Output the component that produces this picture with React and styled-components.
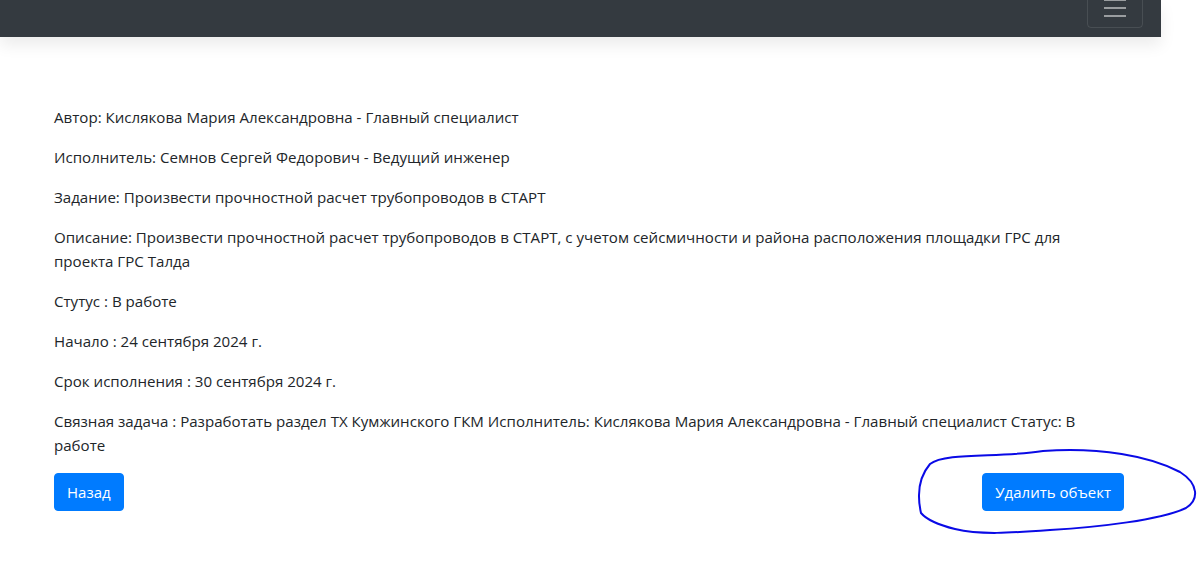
import React from "react";
import styled, { createGlobalStyle } from "styled-components";

const Global = createGlobalStyle`
  html, body { margin: 0; padding: 0; background: #fff; }
  body {
    font-family: "Open Sans", "Noto Sans", sans-serif;
    font-size: 15px;
    color: #212529;
    overflow: hidden;
  }
  * { box-sizing: border-box; }
`;

const Page = styled.div`
  position: relative;
  width: 1197px;
  height: 562px;
`;

const Navbar = styled.nav`
  width: 1161px;
  height: 37px;
  background: #343a40;
  display: flex;
  justify-content: flex-end;
  align-items: flex-end;
  padding: 0 18px 9px 0;
  overflow: hidden;
  box-shadow: 0 8px 16px rgba(0, 0, 0, 0.08);
  position: relative;
  z-index: 1;
`;

const Toggler = styled.button`
  width: 56px;
  height: 40px;
  flex: none;
  background: transparent;
  border: 1px solid rgba(255, 255, 255, 0.1);
  border-radius: 4px;
  padding: 4px 12px;
  display: flex;
  align-items: center;
  justify-content: center;
`;

const Main = styled.main`
  width: 1124px;
  padding: 68px 0 0 54px;
`;

const Para = styled.p`
  margin: 0 0 16px;
  line-height: 24px;
  max-width: 1050px;
  font-size: 15.1px;
`;

const Actions = styled.div`
  display: flex;
  justify-content: space-between;
  align-items: center;
`;

const Button = styled.button`
  font-family: inherit;
  font-size: 15px;
  line-height: 24px;
  height: 38px;
  padding: 6px 12px;
  color: #fff;
  background: #007bff;
  border: 1px solid #007bff;
  border-radius: 4px;
`;

const Scribble = styled.svg`
  position: absolute;
  left: 0;
  top: 0;
  pointer-events: none;
`;

const lines = [
  "Автор: Кислякова Мария Александровна - Главный специалист",
  "Исполнитель: Семнов Сергей Федорович - Ведущий инженер",
  "Задание: Произвести прочностной расчет трубопроводов в СТАРТ",
  "Описание: Произвести прочностной расчет трубопроводов в СТАРТ, с учетом сейсмичности и района расположения площадки ГРС для проекта ГРС Талда",
  "Стутус : В работе",
  "Начало : 24 сентября 2024 г.",
  "Срок исполнения : 30 сентября 2024 г.",
  "Связная задача : Разработать раздел ТХ Кумжинского ГКМ Исполнитель: Кислякова Мария Александровна - Главный специалист Статус: В работе",
];

export default function App() {
  return (
    <Page>
      <Global />
      <Navbar>
        <Toggler aria-label="menu">
          <svg width="30" height="30" viewBox="0 0 30 30">
            <path
              d="M4 7h22M4 15h22M4 23h22"
              stroke="rgba(255,255,255,0.5)"
              strokeWidth="2"
              strokeLinecap="butt"
            />
          </svg>
        </Toggler>
      </Navbar>
      <Main>
        {lines.map((t) => (
          <Para key={t}>{t}</Para>
        ))}
        <Actions>
          <Button>Назад</Button>
          <Button>Удалить объект</Button>
        </Actions>
      </Main>
      <Scribble width="1197" height="562" viewBox="0 0 1197 562">
        <path
          d="M921 513 C917 495, 918 478, 930 464 C945 452, 1000 458, 1043 451 C1100 447, 1150 456, 1180 472 C1199 484, 1199 500, 1186 508 C1160 520, 1100 527, 1050 530 C1010 533, 980 535, 955 529 C935 524, 926 519, 921 513 Z"
          fill="none"
          stroke="#0a0ae6"
          strokeWidth="2"
          strokeLinejoin="round"
        />
      </Scribble>
    </Page>
  );
}
